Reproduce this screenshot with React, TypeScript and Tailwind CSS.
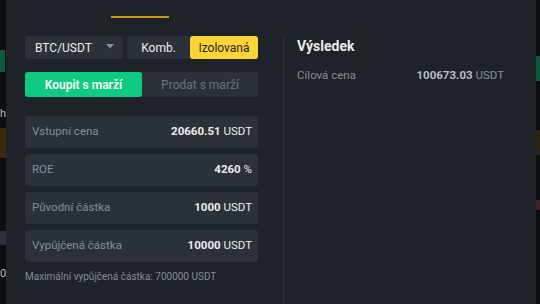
const rows = [
  { label: "Vstupní cena", value: "20660.51", unit: "USDT" },
  { label: "ROE", value: "4260", unit: "%" },
  { label: "Původní částka", value: "1000", unit: "USDT" },
  { label: "Vypůjčená částka", value: "10000", unit: "USDT" },
];

function Backdrop({ side }: { side: "left" | "right" }) {
  if (side === "left") {
    return (
      <div className="relative w-[6px] shrink-0 overflow-hidden bg-[#0b0e11] text-[11px] text-[#848e9c]">
        <div className="absolute left-0 top-[50px] h-[22px] w-[5px] bg-[#0f5a3c]" />
        <div className="absolute left-0 top-[106px] text-[#b7bdc6]">h</div>
        <div className="absolute left-0 top-[128px] h-[30px] w-[6px] bg-[#3a2b0c]" />
        <div className="absolute left-0 top-[231px] h-[14px] w-[6px] bg-[#2b3139]" />
        <div className="absolute left-0 top-[266px] text-[#b7bdc6]">0</div>
      </div>
    );
  }
  return (
    <div className="relative w-[4px] shrink-0 overflow-hidden bg-[#0b0e11]">
      <div className="absolute left-0 top-[56px] h-[25px] w-[4px] bg-[#0f5a3c]" />
      <div className="absolute left-0 top-[130px] h-[25px] w-[4px] bg-[#2e230c]" />
      <div className="absolute left-0 top-[200px] h-[10px] w-[4px] bg-[#4a1b22]" />
    </div>
  );
}

export default function App() {
  return (
    <div
      className="flex h-[304px] w-[540px] overflow-hidden bg-[#0b0e11]"
      style={{ fontFamily: "Roboto, 'Noto Sans', sans-serif" }}
    >
      <Backdrop side="left" />
      <div className="flex w-[530px] shrink-0 flex-col bg-[#1e2329]">
        {/* tab strip – labels sit above the visible area, only the active underline shows */}
        <div className="flex h-[18px] items-end pl-[105px]">
          <div className="h-[2px] w-[58px] bg-[#c99a1e]" />
        </div>

        <div className="flex flex-1 pt-[18px]">
          <div className="ml-[19px] flex w-[233px] flex-col">
            <div className="flex h-[23px] gap-[4px]">
              <div className="flex w-[98px] items-center justify-between rounded-[3px] bg-[#2b3139] pl-[10px] pr-[9px] text-[12px] text-[#eaecef]">
                <span>BTC/USDT</span>
                <svg width="8" height="5" viewBox="0 0 8 5" className="mb-[2px]">
                  <path d="M0 0h8L4 4.5z" fill="#848e9c" />
                </svg>
              </div>
              <div className="flex flex-1 rounded-[3px] bg-[#2b3139] text-[12px]">
                <div className="flex w-[63px] items-center justify-center text-[#eaecef]">Komb.</div>
                <div className="flex flex-1 items-center justify-center rounded-[3px] bg-[#fcd535] text-[#1e2329]">
                  Izolovaná
                </div>
              </div>
            </div>

            <div className="mt-[13px] flex h-[25px] rounded-[3px] bg-[#2b3139] text-[12px]">
              <div className="flex w-[117px] items-center justify-center rounded-[3px] bg-[#0ecb81] font-semibold text-white">
                Koupit s marží
              </div>
              <div className="flex flex-1 items-center justify-center text-[#6b7380]">Prodat s marží</div>
            </div>

            <div className="mt-[19px] flex flex-col gap-[6px]">
              {rows.map((r) => (
                <div
                  key={r.label}
                  className="flex h-[32px] items-center justify-between rounded-[3px] bg-[#2b3139] pl-[7px] pr-[6px] text-[11.5px]"
                >
                  <span className="text-[#848e9c]">{r.label}</span>
                  <span className="text-[#eaecef]">
                    <span className="font-bold">{r.value}</span> {r.unit}
                  </span>
                </div>
              ))}
            </div>

            <p className="mt-[7px] text-[10px] text-[#848e9c]">Maximální vypůjčená částka: 700000 USDT</p>
          </div>

          <div className="ml-[25px] flex w-[221px] flex-col border-l border-[#2b3139] pl-[13px]">
            <h2 className="mt-[1px] text-[14px] font-bold leading-[18px] text-[#eaecef]">Výsledek</h2>
            <div className="mt-[12px] flex items-center justify-between text-[11.5px]">
              <span className="text-[#848e9c]">Cílová cena</span>
              <span className="mr-[0px] text-[#b7bdc6]">
                <span className="font-bold">100673.03</span> <span className="text-[#848e9c]">USDT</span>
              </span>
            </div>
          </div>
        </div>
      </div>
      <Backdrop side="right" />
    </div>
  );
}
